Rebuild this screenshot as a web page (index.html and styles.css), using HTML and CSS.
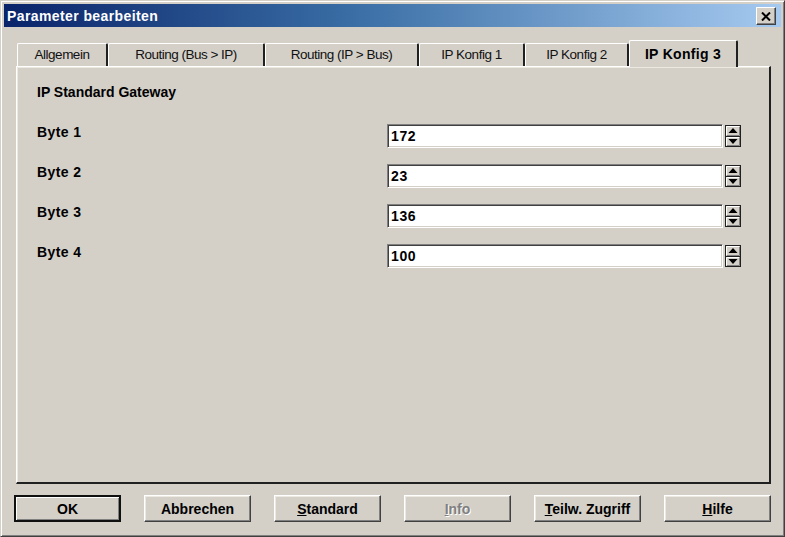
FILE: index.html
```html
<!DOCTYPE html>
<html lang="de">
<head>
    <meta charset="UTF-8">
    <title>Parameter bearbeiten</title>
    <link rel="stylesheet" href="styles.css">
</head>
<body>
    <div class="window">
        <div class="titlebar">
            <span class="title">Parameter bearbeiten</span>
            <button class="close-btn" title="Schließen">
                <svg width="10" height="9" viewBox="0 0 10 9">
                    <path d="M1 0.5 L9 8.5 M9 0.5 L1 8.5" stroke="#000" stroke-width="2" fill="none"/>
                </svg>
            </button>
        </div>

        <div class="tabs">
            <div class="tab" style="width: 91px">Allgemein</div>
            <div class="tab" style="width: 157px">Routing (Bus &gt; IP)</div>
            <div class="tab" style="width: 154px">Routing (IP &gt; Bus)</div>
            <div class="tab" style="width: 106px">IP Konfig 1</div>
            <div class="tab" style="width: 104px">IP Konfig 2</div>
            <div class="tab active" style="width: 109px">IP Konfig 3</div>
        </div>

        <div class="panel">
            <div class="section-title">IP Standard Gateway</div>

            <div class="row">
                <label class="row-label">Byte 1</label>
                <div class="field">172</div>
                <div class="spin"></div>
            </div>
            <div class="row">
                <label class="row-label">Byte 2</label>
                <div class="field">23</div>
                <div class="spin"></div>
            </div>
            <div class="row">
                <label class="row-label">Byte 3</label>
                <div class="field">136</div>
                <div class="spin"></div>
            </div>
            <div class="row">
                <label class="row-label">Byte 4</label>
                <div class="field">100</div>
                <div class="spin"></div>
            </div>
        </div>

        <div class="buttons">
            <button class="btn default">OK</button>
            <button class="btn">Abbrechen</button>
            <button class="btn"><u>S</u>tandard</button>
            <button class="btn disabled"><u>I</u>nfo</button>
            <button class="btn"><u>T</u>eilw. Zugriff</button>
            <button class="btn"><u>H</u>ilfe</button>
        </div>
    </div>

    <script>
        // Spin-Buttons einfügen (gleiche Grafik für alle Felder)
        const spinSvg = `
            <svg width="16" height="22" viewBox="0 0 16 22">
                <rect x="0.5" y="0.5" width="15" height="21" fill="#d4d0c8" stroke="#202020"/>
                <path d="M1.5 10 V1.5 H14" stroke="#fff" fill="none"/>
                <path d="M1.5 20.5 V12.5 H14" stroke="#fff" fill="none"/>
                <path d="M14.5 2 V10.5 H2" stroke="#808080" fill="none"/>
                <path d="M14.5 12.5 V20.5 H2" stroke="#808080" fill="none"/>
                <line x1="0" y1="11.5" x2="16" y2="11.5" stroke="#202020"/>
                <path d="M8 3 L12.5 8 H3.5 Z" fill="#000"/>
                <path d="M3.5 14 H12.5 L8 19 Z" fill="#000"/>
            </svg>`;
        document.querySelectorAll('.spin').forEach(el => {
            el.innerHTML = spinSvg;
        });
    </script>
</body>
</html>
```

FILE: styles.css
```css
:root {
    --face: #d4d0c8;
    --shadow: #808080;
    --dark: #404040;
    --light: #ffffff;
}

body {
    margin: 0;
    font-family: 'Liberation Sans', Arial, sans-serif;
    background: var(--face);
}

.window {
    width: 785px;
    height: 537px;
    box-sizing: border-box;
    display: flex;
    flex-direction: column;
    padding: 3px;
    background: var(--face);
    border: 1px solid;
    border-color: var(--face) var(--dark) var(--dark) var(--face);
    box-shadow: inset 1px 1px var(--light), inset -1px -1px var(--shadow);
}

/* Titelleiste */
.titlebar {
    height: 23px;
    display: flex;
    align-items: center;
    background: linear-gradient(90deg, #0a246a 0%, #3a6ea5 45%, #a6caf0 100%);
}

.title {
    color: white;
    font-weight: bold;
    font-size: 14px;
    letter-spacing: 0.4px;
    padding-left: 3px;
}

.close-btn {
    margin-left: auto;
    margin-right: 5px;
    margin-top: 1px;
    width: 20px;
    height: 18px;
    padding: 0;
    display: flex;
    align-items: center;
    justify-content: center;
    background: var(--face);
    border: 1px solid;
    border-color: var(--light) var(--dark) var(--dark) var(--light);
    box-shadow: inset -1px -1px var(--shadow);
}

/* Registerkarten */
.tabs {
    display: flex;
    align-items: flex-end;
    height: 26px;
    margin-top: 13px;
    padding-left: 13px;
}

.tab {
    box-sizing: border-box;
    height: 23px;
    padding-top: 3px;
    text-align: center;
    font-size: 13.5px;
    letter-spacing: -0.5px;
    color: #111;
    border-top: 1px solid var(--light);
    border-left: 1px solid var(--light);
    border-right: 2px solid #202020;
    border-radius: 2px 2px 0 0;
}

.tab.active {
    height: 27px;
    margin-bottom: -1px;
    position: relative;
    z-index: 1;
    padding-top: 5px;
    font-weight: bold;
    font-size: 14px;
    letter-spacing: 0.3px;
    background: var(--face);
    color: #000;
}

/* Inhalt */
.panel {
    flex: 1;
    margin: 0 10px 0 12px;
    padding: 17px 28px 0 20px;
    border-top: 1px solid var(--light);
    border-left: 1px solid var(--light);
    border-right: 2px solid #202020;
    border-bottom: 2px solid #202020;
    box-shadow: inset 1px 1px #ece9e2;
}

.section-title {
    font-weight: bold;
    font-size: 14px;
    line-height: 16px;
    margin-bottom: 24px;
}

.row {
    display: flex;
    align-items: flex-start;
    margin-bottom: 16px;
}

.row-label {
    font-weight: bold;
    font-size: 14px;
    letter-spacing: 0.4px;
    line-height: 16px;
    margin-right: auto;
}

.field {
    box-sizing: border-box;
    width: 336px;
    height: 24px;
    padding: 3px 0 0 3px;
    background: white;
    font-weight: bold;
    font-size: 14px;
    letter-spacing: 0.6px;
    border: 1px solid;
    border-color: var(--shadow) var(--light) var(--light) var(--shadow);
    box-shadow: inset 1px 1px var(--dark), inset -1px -1px var(--face);
}

.spin {
    margin-left: 2px;
    margin-top: 1px;
    width: 16px;
    height: 22px;
}

.spin svg {
    display: block;
}

/* Schaltflächen */
.buttons {
    display: flex;
    justify-content: space-between;
    margin: 11px 10px 11px 10px;
}

.btn {
    width: 107px;
    height: 27px;
    padding: 0;
    font-family: 'Liberation Sans', Arial, sans-serif;
    font-weight: bold;
    font-size: 14px;
    color: #000;
    background: var(--face);
    border: 1px solid;
    border-color: var(--light) var(--dark) var(--dark) var(--light);
    box-shadow: inset -1px -1px var(--shadow), inset 1px 1px #ece9e2;
}

.btn.default {
    border: 2px solid #101010;
    box-shadow: inset 1px 1px var(--light), inset -1px -1px var(--shadow);
}

.btn.disabled {
    color: var(--shadow);
    text-shadow: 1px 1px var(--light);
}
```
